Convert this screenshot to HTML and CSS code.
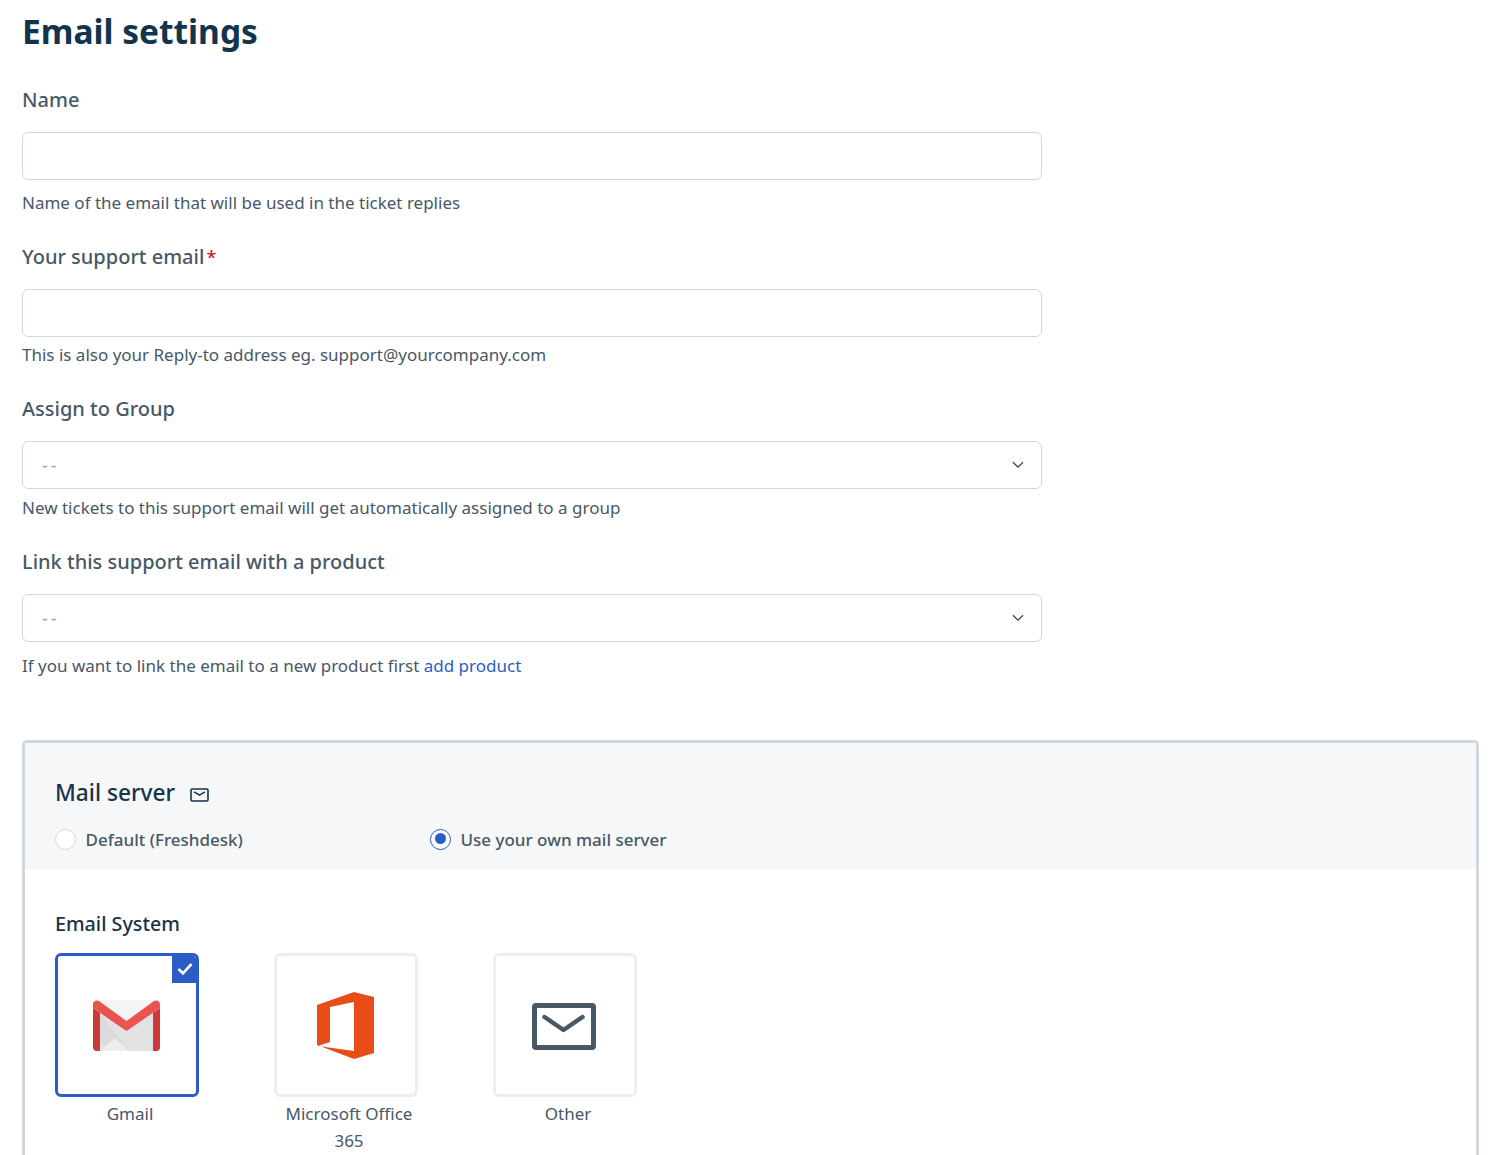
FILE: index.html
```html
<!DOCTYPE html>
<html lang="en">
<head>
<meta charset="utf-8">
<title>Email settings</title>
<link rel="stylesheet" href="styles.css">
</head>
<body>
<main class="page">
  <h1 class="title">Email settings</h1>
  <div class="form">
    <div class="field field-first">
      <label class="label">Name</label>
      <input class="input" type="text">
      <p class="help help-a">Name of the email that will be used in the ticket replies</p>
    </div>
    <div class="field">
      <label class="label">Your support email<span class="req">*</span></label>
      <input class="input" type="text">
      <p class="help help-b">This is also your Reply-to address eg. support@yourcompany.com</p>
    </div>
    <div class="field">
      <label class="label">Assign to Group</label>
      <div class="select"><span class="ph">--</span>
        <svg class="chev" width="12" height="8" viewBox="0 0 12 8"><path d="M1 1.2l5 5 5-5" fill="none" stroke="#264966" stroke-width="1.3"/></svg>
      </div>
      <p class="help help-c">New tickets to this support email will get automatically assigned to a group</p>
    </div>
    <div class="field">
      <label class="label">Link this support email with a product</label>
      <div class="select"><span class="ph">--</span>
        <svg class="chev" width="12" height="8" viewBox="0 0 12 8"><path d="M1 1.2l5 5 5-5" fill="none" stroke="#264966" stroke-width="1.3"/></svg>
      </div>
      <p class="help help-d">If you want to link the email to a new product first <a class="link" href="#">add product</a></p>
    </div>
  </div>
  <section class="panel">
    <div class="panel-head">
      <h2 class="panel-title">Mail server
        <svg class="mail-ic" width="19" height="14" viewBox="0 0 19 14"><rect x="1" y="1" width="17" height="12" rx="1.2" fill="none" stroke="#183247" stroke-width="1.6"/><path d="M4.500 4.200l5 3 5-3" fill="none" stroke="#183247" stroke-width="1.500" stroke-linecap="round"/></svg>
      </h2>
      <div class="radios">
        <div class="radio-item"><span class="radio"></span><span class="radio-label">Default (Freshdesk)</span></div>
        <div class="radio-item"><span class="radio radio-on"></span><span class="radio-label">Use your own mail server</span></div>
      </div>
    </div>
    <div class="panel-body">
      <h3 class="sys-title">Email System</h3>
      <div class="cards">
        <div class="card-wrap">
          <div class="card card-on">
            <span class="tick"><svg width="16" height="13" viewBox="0 0 16 13"><path d="M1.500 7l4.500 4.300L14.500 2" fill="none" stroke="#fff" stroke-width="2.600"/></svg></span>
            <svg class="logo logo-gmail" width="67" height="51" viewBox="0 0 67 51">
              <path d="M4 0h59a4 4 0 0 1 4 4v43a4 4 0 0 1-4 4H4a4 4 0 0 1-4-4V4a4 4 0 0 1 4-4z" fill="#e2e2e2"/>
              <path d="M3 0h61l3 4-33.500 26L0 4z" fill="#f4f4f4"/>
              <path d="M7 13l29 38H16L7 40z" fill="#d8d8d8" opacity=".7"/>
              <path d="M7 51l15-13 14 13z" fill="#eeeeee"/>
              <path d="M0 8l7 5v38H4a4 4 0 0 1-4-4z" fill="#cb3939"/>
              <path d="M67 8l-7 5v38h3a4 4 0 0 0 4-4z" fill="#cb3939"/>
              <path d="M0 4.500A4 4 0 0 1 6 1L33.500 21 61 1a4 4 0 0 1 6 3.500V8L33.500 31 0 8z" fill="#eb5350"/>
            </svg>
          </div>
          <div class="card-name">Gmail</div>
        </div>
        <div class="card-wrap">
          <div class="card">
            <svg class="logo" width="58" height="67" viewBox="0 0 58 67">
              <path fill-rule="evenodd" d="M37 0l20 5v56l-20 6L0 53V13zM13 15l24-5v49L1 54l12-4z" fill="#e84c17"/>
            </svg>
          </div>
          <div class="card-name">Microsoft Office 365</div>
        </div>
        <div class="card-wrap">
          <div class="card">
            <svg class="logo logo-other" width="64" height="47" viewBox="0 0 64 47"><rect x="2.500" y="2.500" width="59" height="42" rx="1.500" fill="none" stroke="#475867" stroke-width="5"/><path d="M12.500 14L31.500 27 50.500 14" fill="none" stroke="#475867" stroke-width="4.500" stroke-linecap="round" stroke-linejoin="round"/></svg>
          </div>
          <div class="card-name">Other</div>
        </div>
      </div>
    </div>
  </section>
</main>
</body>
</html>
```
FILE: styles.css
```css
* { box-sizing: border-box; }
html, body { margin: 0; padding: 0; background: #fff; }
body { height: 1155px; overflow: hidden; font-family: "Noto Sans", "Open Sans", sans-serif; color: #475867; }
.page { padding: 0 19px 0 22px; }
.title { margin: 0; padding-top: 6px; font-size: 33.500px; line-height: 50px; font-weight: 700; color: #12344d; }
.form { width: 1020px; }
.field { margin-top: 22px; }
.field-first { margin-top: 28px; }
.label { display: block; font-size: 20px; line-height: 32px; font-weight: 500; color: #475867; margin-bottom: 16px; }
.req { color: #c82124; font-size: 18px; margin-left: 2px; }
.input, .select { display: block; width: 100%; height: 48px; border: 1px solid #cfd7df; border-radius: 6px; background: #fff; outline: none; }
.select { display: flex; align-items: center; justify-content: space-between; padding: 0 17px 0 19px; }
.ph { color: #92a2b1; font-size: 18px; letter-spacing: 3px; }
.chev { display: block; }
.help { height: 32px; font-size: 17px; line-height: 32px; color: #475867; }
.help-a { margin: 7px 0 0; }
.help-b { margin: 2px 0 0; }
.help-c { margin: 3px 0 0; }
.help-d { margin: 8px 0 0; }
.link { color: #2c5cc5; text-decoration: none; }
.panel { margin-top: 58px; border: 3px solid #cfd7df; border-bottom: 0; border-radius: 5px 5px 0 0; height: 415px; }
.panel-head { height: 126px; background: #f5f7f9; padding: 30px 30px 0; }
.panel-title { margin: 0; display: flex; align-items: center; gap: 15px; font-size: 22.700px; line-height: 40px; font-weight: 500; color: #183247; }
.mail-ic { margin-top: 3px; }
.radios { display: flex; margin-top: 10px; }
.radio-item { display: flex; align-items: center; gap: 9.500px; height: 32px; width: 375px; }
.radio { width: 21px; height: 21px; border-radius: 50%; border: 1px solid #cfd7df; background: #fff; flex: none; }
.radio-on { border: 1.500px solid #2c5cc5; position: relative; }
.radio-on::after { content: ""; position: absolute; left: 3.500px; top: 3.500px; width: 11px; height: 11px; border-radius: 50%; background: #2c5cc5; }
.radio-label { font-size: 17px; font-weight: 500; color: #475867; }
.panel-body { padding: 40px 30px 0; }
.sys-title { margin: 0; font-size: 19.700px; line-height: 30px; font-weight: 500; color: #183247; }
.cards { display: flex; gap: 75px; margin-top: 14px; }
.card-wrap { width: 144px; }
.card { position: relative; width: 144px; height: 144px; border: 3px solid #ebeff3; border-radius: 6px; background: #fff; display: flex; align-items: center; justify-content: center; }
.card-on { border-color: #2c5cc5; overflow: hidden; }
.tick { position: absolute; top: -3px; right: -3px; width: 27px; height: 30px; padding-right: 2px; background: #2c5cc5; display: flex; align-items: center; justify-content: center; }
.logo-gmail { margin-right: 2px; }
.logo-other { margin: 3px 2px 0 0; }
.card-name { margin: 3px -6px 0 0; text-align: center; font-size: 17px; line-height: 27px; color: #475867; }
```
